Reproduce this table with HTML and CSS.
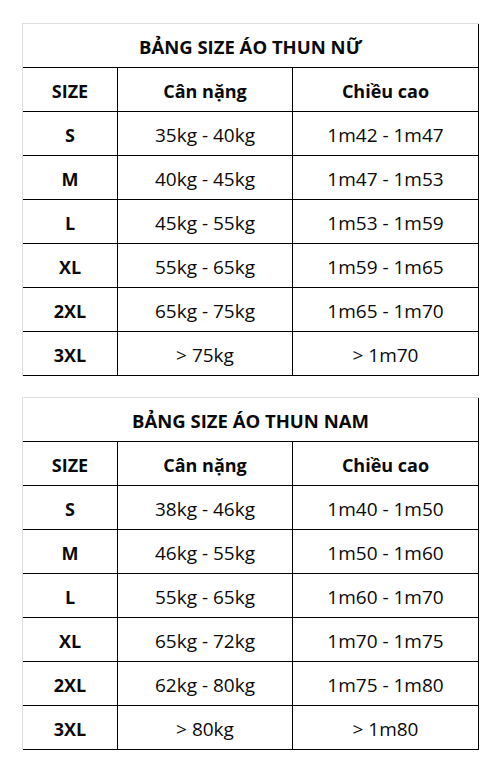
FILE: index.html
```html
<!DOCTYPE html>
<html>
<head>
<meta charset="utf-8">
<link rel="stylesheet" href="styles.css">
</head>
<body>
<div class="page">
  <div class="sheet">
    <div class="cell title">BẢNG SIZE ÁO THUN NỮ</div>
    <div class="cell head">SIZE</div>
    <div class="cell head">Cân nặng</div>
    <div class="cell head">Chiều cao</div>
    <div class="cell size">S</div><div class="cell">35kg - 40kg</div><div class="cell">1m42 - 1m47</div>
    <div class="cell size">M</div><div class="cell">40kg - 45kg</div><div class="cell">1m47 - 1m53</div>
    <div class="cell size">L</div><div class="cell">45kg - 55kg</div><div class="cell">1m53 - 1m59</div>
    <div class="cell size">XL</div><div class="cell">55kg - 65kg</div><div class="cell">1m59 - 1m65</div>
    <div class="cell size">2XL</div><div class="cell">65kg - 75kg</div><div class="cell">1m65 - 1m70</div>
    <div class="cell size">3XL</div><div class="cell">&gt; 75kg</div><div class="cell">&gt; 1m70</div>
  </div>
  <div class="sheet">
    <div class="cell title">BẢNG SIZE ÁO THUN NAM</div>
    <div class="cell head">SIZE</div>
    <div class="cell head">Cân nặng</div>
    <div class="cell head">Chiều cao</div>
    <div class="cell size">S</div><div class="cell">38kg - 46kg</div><div class="cell">1m40 - 1m50</div>
    <div class="cell size">M</div><div class="cell">46kg - 55kg</div><div class="cell">1m50 - 1m60</div>
    <div class="cell size">L</div><div class="cell">55kg - 65kg</div><div class="cell">1m60 - 1m70</div>
    <div class="cell size">XL</div><div class="cell">65kg - 72kg</div><div class="cell">1m70 - 1m75</div>
    <div class="cell size">2XL</div><div class="cell">62kg - 80kg</div><div class="cell">1m75 - 1m80</div>
    <div class="cell size">3XL</div><div class="cell">&gt; 80kg</div><div class="cell">&gt; 1m80</div>
  </div>
</div>
</body>
</html>
```
FILE: styles.css
```css
html, body {
  margin: 0;
  padding: 0;
  background: #fff;
}
.page {
  padding: 23px 22px 0 22px;
  display: flex;
  flex-direction: column;
  gap: 21px;
  font-family: "Open Sans", "Liberation Sans", sans-serif;
  color: #0a0a0a;
}
.sheet {
  display: grid;
  grid-template-columns: 95px 175px 186px;
  grid-auto-rows: 44px;
  width: max-content;
  border-top: 1px solid #dedede;
  border-left: 1px solid #dedede;
}
.cell {
  box-sizing: border-box;
  border-right: 1px solid #000;
  border-bottom: 1px solid #000;
  display: flex;
  align-items: center;
  justify-content: center;
  font-size: 19px;
  padding-top: 3px;
}
.title {
  grid-column: 1 / 4;
  font-weight: 700;
  font-size: 18.5px;
  padding-top: 1px;
}
.head, .size {
  font-weight: 700;
  font-size: 18px;
  padding-top: 2px;
}
```
